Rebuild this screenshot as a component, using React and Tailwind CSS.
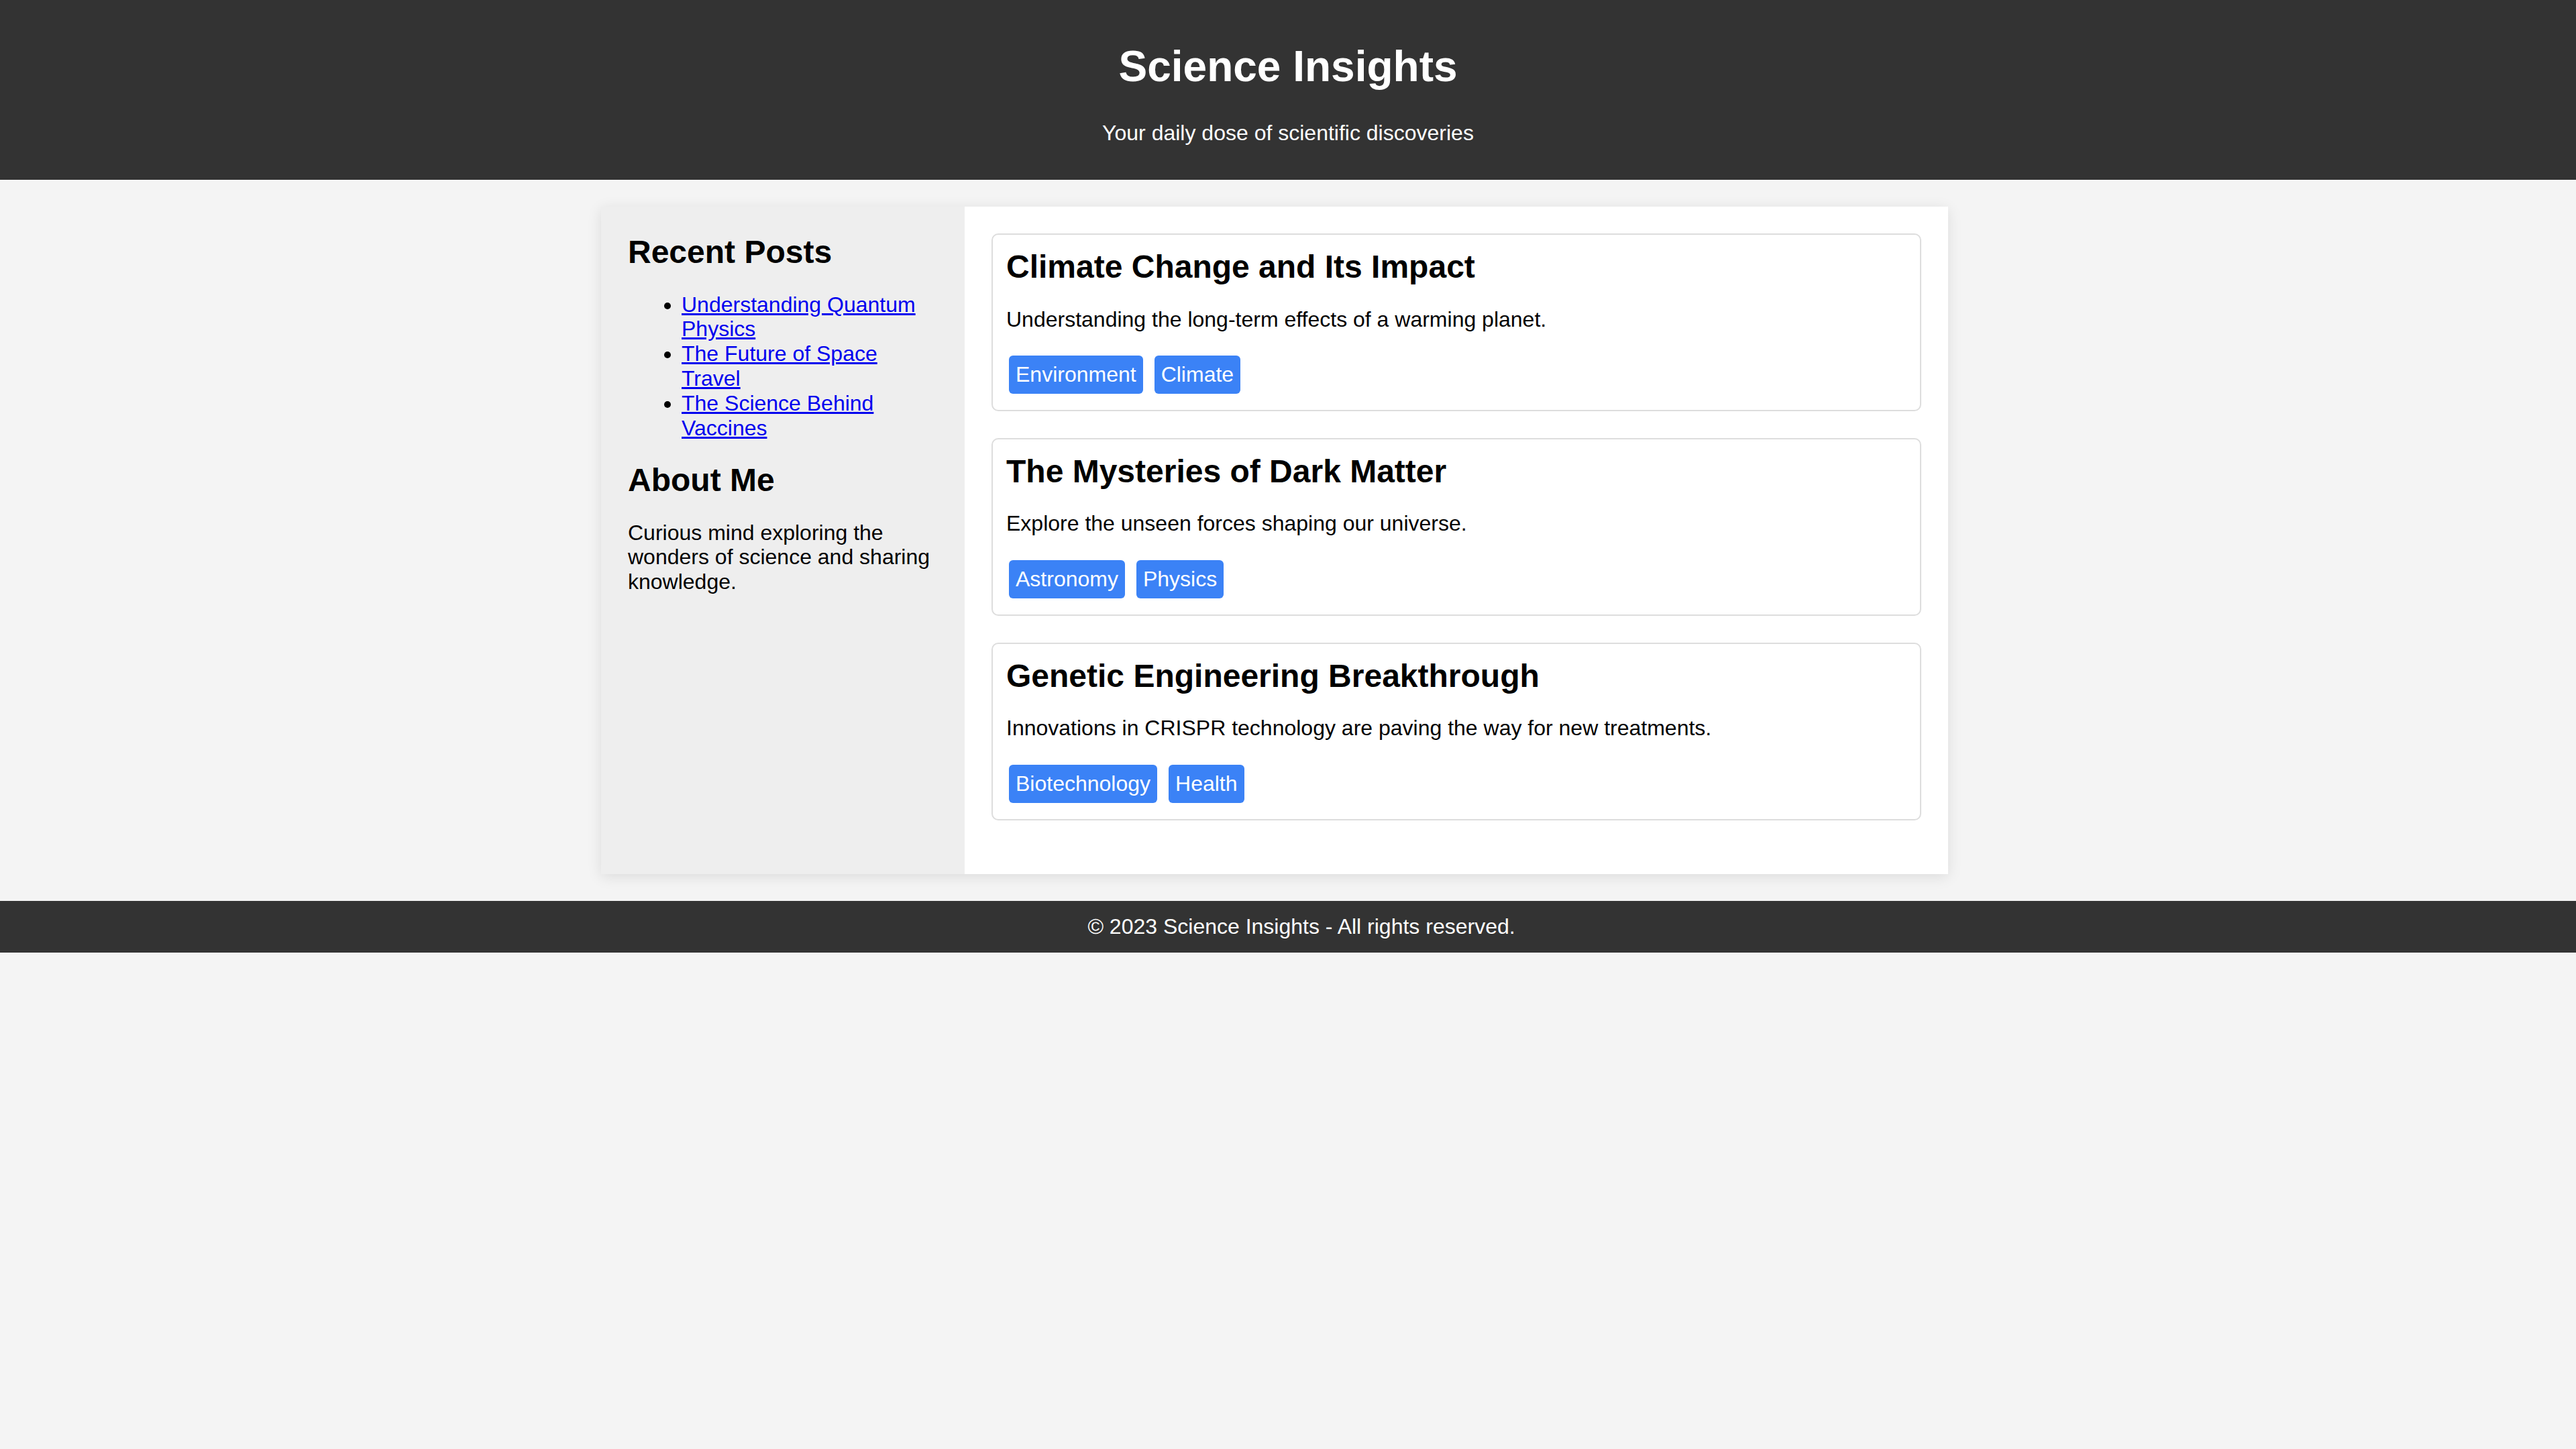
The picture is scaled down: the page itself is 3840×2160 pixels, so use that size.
const recentPosts = [
    "Understanding Quantum Physics",
    "The Future of Space Travel",
    "The Science Behind Vaccines",
];

const posts = [
    {
        title: "Climate Change and Its Impact",
        text: "Understanding the long-term effects of a warming planet.",
        tags: ["Environment", "Climate"],
    },
    {
        title: "The Mysteries of Dark Matter",
        text: "Explore the unseen forces shaping our universe.",
        tags: ["Astronomy", "Physics"],
    },
    {
        title: "Genetic Engineering Breakthrough",
        text: "Innovations in CRISPR technology are paving the way for new treatments.",
        tags: ["Biotechnology", "Health"],
    },
];

const PostCard = ({ post }) => (
    <article className="mb-[40px] rounded-[10px] border-2 border-[#ddd] bg-white p-[20px]">
        <h2 className="mb-[20px] text-[48px] font-bold leading-[1.15]">{post.title}</h2>
        <p className="my-[32px] text-[32px]">{post.text}</p>
        <div className="flex flex-wrap gap-[9px]">
            {post.tags.map((tag) => (
                <span key={tag} className="m-[4px] rounded-[6px] bg-[#3b82f6] p-[10px] text-[32px] text-white">
                    {tag}
                </span>
            ))}
        </div>
    </article>
);

const App = () => {
    return (
        <div className="min-h-screen bg-[#f4f4f4] font-['Liberation_Sans',Arial,sans-serif] leading-[1.15] text-black">
            <header className="bg-[#333] p-[20px] text-center text-white">
                <h1 className="my-[43px] text-[64px] font-bold leading-[1.15]">Science Insights</h1>
                <p className="my-[32px] text-[32px]">Your daily dose of scientific discoveries</p>
            </header>

            <div className="mx-auto my-[40px] w-[2048px] pr-[40px]">
                <div className="flex bg-white shadow-[0_4px_20px_rgba(0,0,0,0.1)]">
                    <aside className="flex-1 bg-[#eee] p-[40px]">
                        <h2 className="mb-[20px] text-[48px] font-bold leading-[1.15]">Recent Posts</h2>
                        <ul className="my-[32px] list-disc pl-[80px] text-[32px]">
                            {recentPosts.map((item) => (
                                <li key={item}>
                                    <a href="#" className="text-[#0000ee] underline">{item}</a>
                                </li>
                            ))}
                        </ul>
                        <h2 className="mb-[20px] text-[48px] font-bold leading-[1.15]">About Me</h2>
                        <p className="my-[32px] text-[32px]">
                            Curious mind exploring the wonders of science and sharing knowledge.
                        </p>
                    </aside>

                    <main className="flex-[3] bg-white p-[40px]">
                        {posts.map((post) => (
                            <PostCard key={post.title} post={post} />
                        ))}
                    </main>
                </div>
            </div>

            <footer className="bg-[#333] py-[20px] pl-[40px] text-center text-[32px] text-white">
                © 2023 Science Insights - All rights reserved.
            </footer>
        </div>
    );
};

export default App;
